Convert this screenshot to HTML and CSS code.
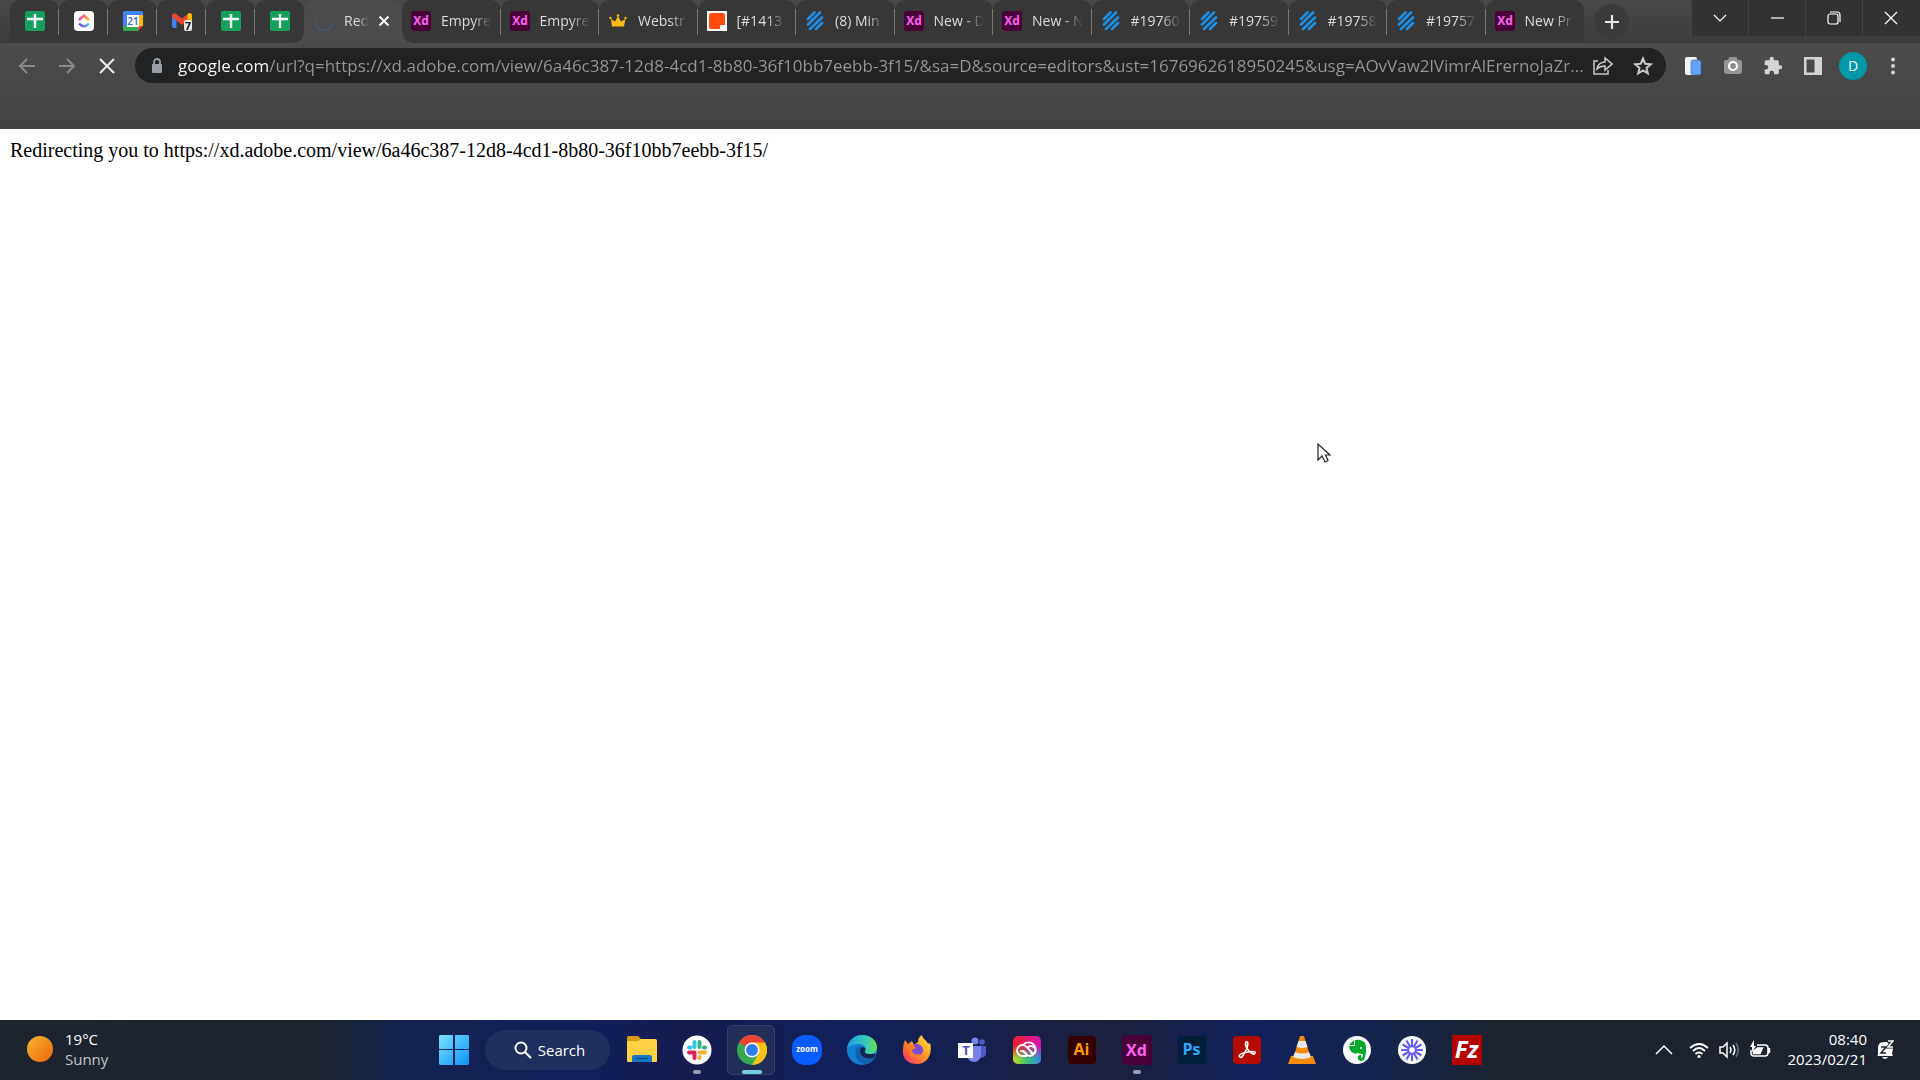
FILE: index.html
```html
<!DOCTYPE html>
<html lang="en">
<head>
<meta charset="utf-8">
<title>Redirecting</title>
<link rel="stylesheet" href="styles.css">
</head>
<body>
<svg class="defs" aria-hidden="true">
  <defs>
    <symbol id="sheets" viewBox="0 0 20 20"><rect width="20" height="20" rx="2" fill="#12a05c"/><path d="M10 3v14M2 8h16" stroke="#fff" stroke-width="2.4"/></symbol>
    <symbol id="help" viewBox="0 0 20 20"><path d="M3 8L9.500 1.500M3 13.500L15 1.500M5 18L17 6.500M11 18L17 12" stroke="#1c8fe8" stroke-width="2.600" stroke-linecap="round"/></symbol>
    <symbol id="xd" viewBox="0 0 20 20"><rect width="20" height="20" rx="3" fill="#470137"/><text x="10" y="14" text-anchor="middle" font-size="12" font-weight="700" fill="#ff61f6">Xd</text></symbol>
  </defs>
</svg>

<header class="browser">
  <div class="strip">
    <div class="tabs">
      <button class="tab pinned" aria-label="Sheet"><svg class="fav"><use href="#sheets"/></svg></button>
      <button class="tab pinned" aria-label="ClickUp"><svg class="fav" viewBox="0 0 20 20"><defs><linearGradient id="cu1"><stop offset="0" stop-color="#f33fc0"/><stop offset="1" stop-color="#ffb01c"/></linearGradient><linearGradient id="cu2"><stop offset="0" stop-color="#8930fd"/><stop offset="1" stop-color="#49ccf9"/></linearGradient></defs><rect width="20" height="20" rx="4" fill="#fff"/><path d="M5 9l5-4.500L15 9" fill="none" stroke="url(#cu1)" stroke-width="2.600"/><path d="M5 12.500q5 5.500 10 0" fill="none" stroke="url(#cu2)" stroke-width="2.600"/></svg></button>
      <button class="tab pinned" aria-label="Calendar"><svg class="fav" viewBox="0 0 20 20"><path d="M2 0h16a2 2 0 0 1 2 2v13h-5v5H2a2 2 0 0 1-2-2V2a2 2 0 0 1 2-2z" fill="#4285f4"/><path d="M16 4h4v11h-4z" fill="#fbbc04"/><path d="M0 15h15v5H2a2 2 0 0 1-2-2z" fill="#34a853"/><path d="M15 15h5l-5 5z" fill="#ea4335"/><path d="M4 4h12v12H4z" fill="#fff"/><text x="10" y="14" text-anchor="middle" font-size="10" font-weight="600" fill="#2a6cd8">21</text></svg></button>
      <button class="tab pinned" aria-label="Gmail"><svg class="fav" viewBox="0 0 20 20"><path d="M0 4h4.500v13H2a2 2 0 0 1-2-2z" fill="#4285f4"/><path d="M15.500 4H20v11h-4.500z" fill="#fbbc04"/><path d="M0 6V4q1-3 4-1.200L10 7.500l6-4.700Q19 1 20 4v2l-10 8z" fill="#ea4335"/><path d="M15.500 3.200Q19 .5 20 4v2l-4.500 3.500z" fill="#fbbc04"/><rect x="12" y="9" width="8" height="11" rx="2" fill="#e8e8e8"/><text x="16" y="19" text-anchor="middle" font-size="11" font-weight="700" fill="#111">7</text></svg></button>
      <button class="tab pinned" aria-label="Sheet"><svg class="fav"><use href="#sheets"/></svg></button>
      <button class="tab pinned last" aria-label="Sheet"><svg class="fav"><use href="#sheets"/></svg></button>
      <div class="tab active"><svg class="fav" viewBox="0 0 20 20"><path d="M1 9a9 9 0 0 0 18 2" fill="none" stroke="#465574" stroke-width="1.800"/></svg><span class="title">Red</span><button class="close" aria-label="Close tab"><svg viewBox="0 0 12 12" width="12" height="12"><path d="M1.500 1.500l9 9m0-9l-9 9" stroke="#fff" stroke-width="2"/></svg></button></div>
      <button class="tab"><svg class="fav"><use href="#xd"/></svg><span class="title">Empyre</span></button>
      <button class="tab"><svg class="fav"><use href="#xd"/></svg><span class="title">Empyre</span></button>
      <button class="tab"><svg class="fav" viewBox="0 0 20 20"><path d="M3 8l4 2.500L10 5l3 5.500L17.500 8 16 15.500H4z" fill="#fdb813"/><circle cx="2.500" cy="7" r="1.200" fill="#fdb813"/><circle cx="10" cy="4.500" r="1.300" fill="#fdb813"/><circle cx="17.500" cy="7" r="1.200" fill="#fdb813"/></svg><span class="title">Webstr</span></button>
      <button class="tab"><svg class="fav" viewBox="0 0 20 20"><path d="M0 0h20v20H0z" fill="#fff"/><path d="M5 2h11q2 0 2 2v10h-4q-1 0-1 1v3H4q-2 0-2-2V5q0-3 3-3z" fill="#ff4a0d"/></svg><span class="title">[#1413</span></button>
      <button class="tab"><svg class="fav"><use href="#help"/></svg><span class="title">(8) Min</span></button>
      <button class="tab"><svg class="fav"><use href="#xd"/></svg><span class="title">New - D</span></button>
      <button class="tab"><svg class="fav"><use href="#xd"/></svg><span class="title">New - N</span></button>
      <button class="tab"><svg class="fav"><use href="#help"/></svg><span class="title">#19760</span></button>
      <button class="tab"><svg class="fav"><use href="#help"/></svg><span class="title">#19759</span></button>
      <button class="tab"><svg class="fav"><use href="#help"/></svg><span class="title">#19758</span></button>
      <button class="tab"><svg class="fav"><use href="#help"/></svg><span class="title">#19757</span></button>
      <button class="tab last"><svg class="fav"><use href="#xd"/></svg><span class="title">New Pr</span></button>
    </div>
    <button class="newtab" aria-label="New tab"><svg width="16" height="16" viewBox="0 0 16 16"><path d="M8 1v14M1 8h14" stroke="#e4e4e4" stroke-width="2.200"/></svg></button>
    <div class="window">
      <button aria-label="Tab search"><svg width="14" height="14" viewBox="0 0 14 14"><path d="M1 4l6 6 6-6"/></svg></button>
      <button aria-label="Minimize"><svg width="14" height="14" viewBox="0 0 14 14"><path d="M1 7h13"/></svg></button>
      <button aria-label="Restore"><svg width="14" height="14" viewBox="0 0 14 14"><rect x="1" y="3" width="10" height="10" rx="2"/><path d="M3 1h7a3 3 0 0 1 3 3v7"/></svg></button>
      <button aria-label="Close"><svg width="14" height="14" viewBox="0 0 14 14"><path d="M1 1l12 12M13 1L1 13"/></svg></button>
    </div>
  </div>

  <div class="toolbar">
    <button class="tool dim" aria-label="Back"><svg width="18" height="18" viewBox="0 0 18 18"><path d="M17 9H2M9 2L2 9l7 7"/></svg></button>
    <button class="tool dim" aria-label="Forward"><svg width="18" height="18" viewBox="0 0 18 18"><path d="M1 9h15M9 2l7 7-7 7"/></svg></button>
    <button class="tool" aria-label="Stop"><svg width="18" height="18" viewBox="0 0 18 18"><path d="M2 2l14 14M16 2L2 16"/></svg></button>
    <div class="omnibox">
      <svg width="12" height="16" viewBox="0 0 12 16"><path d="M3 7V4a3 3 0 0 1 6 0v3" fill="none" stroke="#9aa0a6" stroke-width="1.800"/><rect x="1" y="6" width="10" height="9" rx="1" fill="#9aa0a6"/></svg>
      <input type="text" aria-label="Address" value="google.com/url?q=https://xd.adobe.com/view/6a46c387-12d8-4cd1-8b80-36f10bb7eebb-3f15/&amp;sa=D&amp;source=editors&amp;ust=1676962618950245&amp;usg=AOvVaw2lVimrAlErernoJaZr...">
      <button class="tool" aria-label="Share"><svg class="thin" width="20" height="20" viewBox="0 0 20 20"><path d="M5 5H1v13h14v-4M4 13c1-5 4-7 8-7V2l7 6-7 6v-4c-4 0-6 1-8 3z"/></svg></button>
      <button class="tool" aria-label="Bookmark"><svg class="thin star" width="20" height="20" viewBox="0 0 20 20"><path d="M10 2.500l2.200 5.200 5.600.5-4.300 3.700 1.300 5.500L10 14.500l-4.800 2.900 1.300-5.500L2.200 8.200l5.600-.5z"/></svg></button>
    </div>
    <div class="extensions">
      <button class="tool" aria-label="Device extension"><svg class="plain" width="18" height="20" viewBox="0 0 18 20"><rect x="1" y="1" width="12" height="18" rx="2" fill="#f2f4fa"/><rect x="7" y="4" width="10" height="15" rx="2" fill="#62a4fb" stroke="#3d5f96" stroke-width=".6"/></svg></button>
      <button class="tool" aria-label="Screenshot"><svg class="plain" width="20" height="20" viewBox="0 0 20 20"><path d="M3 4h2l1.500-3h7L15 4h2q2 0 2 2v9q0 3-3 3H4q-3 0-3-3V6q0-2 2-2z" fill="#969696"/><circle cx="10" cy="10" r="4" fill="#8d8d8d" stroke="#fff" stroke-width="2.200"/></svg></button>
      <button class="tool" aria-label="Extensions"><svg class="plain" width="20" height="20" viewBox="0 0 24 24"><path d="M20.500 11H19V7c0-1.100-.9-2-2-2h-4V3.500a2.500 2.500 0 0 0-5 0V5H4c-1.100 0-2 .9-2 2v3.800h1.500a2.700 2.700 0 0 1 0 5.400H2V20c0 1.100.9 2 2 2h3.800v-1.500a2.700 2.700 0 0 1 5.400 0V22H17c1.100 0 2-.9 2-2v-4h1.500a2.500 2.500 0 0 0 0-5z" fill="#d4d4d4"/></svg></button>
      <button class="tool" aria-label="Side panel"><svg class="plain" width="18" height="18" viewBox="0 0 18 18"><path d="M0 0h18v18H0zM2.500 2.500v13h8v-13z" fill="#d4d4d4" fill-rule="evenodd"/></svg></button>
      <button class="tool" aria-label="Profile"><span class="avatar">D</span></button>
      <button class="tool" aria-label="Menu"><svg class="plain" width="6" height="18" viewBox="0 0 6 18"><g fill="#d4d4d4"><circle cx="3" cy="2.500" r="2"/><circle cx="3" cy="9" r="2"/><circle cx="3" cy="15.500" r="2"/></g></svg></button>
    </div>
  </div>
</header>

<main class="page">Redirecting you to https://xd.adobe.com/view/6a46c387-12d8-4cd1-8b80-36f10bb7eebb-3f15/
  <svg class="cursor" width="14" height="22" viewBox="0 0 14 22"><path d="M1 1v16l4-4 3 6 3-1.500L8.500 12H13z" fill="#fff" stroke="#222" stroke-width="1.200"/></svg>
</main>

<footer class="taskbar">
  <button class="weather"><svg width="26" height="26" viewBox="0 0 26 26"><defs><linearGradient id="sun" x2="1" y2="1"><stop offset="0" stop-color="#f3b82e"/><stop offset="1" stop-color="#f0640c"/></linearGradient></defs><circle cx="13" cy="13" r="13" fill="url(#sun)"/></svg><span>19°C<small>Sunny</small></span></button>

  <nav class="apps" aria-label="Apps">
    <button class="app" aria-label="Start"><svg width="30" height="30" viewBox="0 0 30 30"><defs><linearGradient id="win" gradientUnits="userSpaceOnUse" x2="30" y2="30"><stop offset="0" stop-color="#7be0ff"/><stop offset="1" stop-color="#0a94f5"/></linearGradient></defs><path d="M1 0h13v14H0V1zM16 0h13l1 1v13H16zM0 15h14v15H1l-1-1zM16 15h14v14l-1 1H16z" fill="url(#win)"/></svg></button>
    <button class="search"><svg width="18" height="18" viewBox="0 0 18 18"><circle cx="7" cy="7" r="5.500" fill="none" stroke="#fff" stroke-width="2"/><path d="M11 11l6 6" stroke="#fff" stroke-width="2.200"/></svg>Search</button>
    <button class="app" aria-label="File Explorer"><svg width="30" height="30" viewBox="0 0 30 30"><path d="M0 3q0-2 2-2h9l3 3h15v8H0z" fill="#d99a10"/><path d="M0 6h11l3-2h14q2 0 2 2v20q0 1-1 1H1q-1 0-1-1z" fill="#ffd143"/><path d="M5 27v-5q0-2 2-2h16q2 0 2 2v5z" fill="#1379c4"/><path d="M9 23.500h12" stroke="#074f88" stroke-width="1.500"/></svg></button>
    <button class="app running" aria-label="Slack"><svg width="30" height="30" viewBox="0 0 30 30"><circle cx="15" cy="15" r="14.500" fill="#fff"/><g stroke-width="4" stroke-linecap="round" fill="none"><path d="M12.500 7v5M7 12.500h1.500" stroke="#36c5f0"/><path d="M17.500 7v5M23 12.500h-1" stroke="#2eb67d"/><path d="M17.500 17.500H23M17.500 23v-1" stroke="#ecb22e"/><path d="M12.500 18v5M7 17.500h5.500" stroke="#e01e5a"/></g></svg></button>
    <button class="app current" aria-label="Chrome"><svg width="30" height="30" viewBox="0 0 30 30"><circle cx="15" cy="15" r="15" fill="#34a853"/><path d="M15 15L2 7.500A15 15 0 0 1 28 7.500z" fill="#ea4335"/><path d="M15 7.500h13A15 15 0 0 1 15 30l6.500-11z" fill="#fbc116"/><circle cx="15" cy="15" r="7.500" fill="#fff"/><circle cx="15" cy="15" r="6" fill="#2d7df0"/></svg></button>
    <button class="app" aria-label="Zoom"><svg width="30" height="30" viewBox="0 0 30 30"><rect width="30" height="30" rx="13" fill="#0b5cff"/><text x="15" y="17" text-anchor="middle" font-size="8" font-weight="700" fill="#fff">zoom</text></svg></button>
    <button class="app" aria-label="Edge"><svg width="30" height="30" viewBox="0 0 30 30"><defs><linearGradient id="edge"><stop offset="0" stop-color="#1f9fe0"/><stop offset=".6" stop-color="#35c7c0"/><stop offset="1" stop-color="#66e04e"/></linearGradient></defs><circle cx="15" cy="15" r="15" fill="#1280d0"/><path d="M0 14C1 5 8 0 15 0c9 0 15 6 15 12 0 5-4 7-7 7-4 0-6-2-5-3 2-2 0-7-6-7C7 9 2 11 0 14z" fill="url(#edge)"/><path d="M9 14c-3 8 3 15 11 15 3-1 6-3 8-6-5 2-16 2-15-7 0-2 2-4 3-4-3-1-6 0-7 2z" fill="#125fae"/><path d="M13 16c0-3 2-4 3-4 3 1 3 3 2 4-1 2 1 3 4 3h7l-2 4c-6 2-14 0-14-7z" fill="#12264f"/></svg></button>
    <button class="app" aria-label="Firefox"><svg width="30" height="30" viewBox="0 0 30 30"><defs><linearGradient id="ff" x1="1" x2="0" y2="1"><stop offset="0" stop-color="#fff44f"/><stop offset=".45" stop-color="#ff9a1f"/><stop offset="1" stop-color="#f0266f"/></linearGradient></defs><path d="M3 5l3 4 4-3 2 4 4-3c0-4 2-6 4-7 0 4 5 5 6 9l2-1c3 11-3 21-13 21S0 23 1 14q0-5 2-9z" fill="url(#ff)"/><circle cx="15" cy="15" r="6" fill="#7a4bd6"/><path d="M4 9c4 0 8 1 10 4l-4 2c0 4 5 6 9 3-2 6-15 6-15-9z" fill="#ff7a25"/></svg></button>
    <button class="app" aria-label="Teams"><svg width="28" height="28" viewBox="0 0 28 28"><circle cx="17" cy="5" r="3.500" fill="#7b83eb"/><circle cx="24" cy="6" r="2.800" fill="#5059c9"/><path d="M20 10h8v8q-1 4-6 4z" fill="#5059c9"/><path d="M9 10h14v9q-1 7-7 7t-7-7z" fill="#7b83eb"/><path d="M0 7h15v15H0z" fill="#fff"/><text x="8" y="19" text-anchor="middle" font-size="13" font-weight="700" fill="#4b53bc">T</text></svg></button>
    <button class="app" aria-label="Creative Cloud"><svg width="28" height="28" viewBox="0 0 28 28"><defs><linearGradient id="cc1"><stop offset="0" stop-color="#ee1c25"/><stop offset="1" stop-color="#d815b5"/></linearGradient><linearGradient id="cc2"><stop offset="0" stop-color="#c9d925"/><stop offset=".4" stop-color="#4fc860"/><stop offset="1" stop-color="#258bea"/></linearGradient><linearGradient id="cc3" x2="0" y2="1"><stop offset=".35" stop-color="#fff" stop-opacity="0"/><stop offset=".8" stop-color="#fff"/></linearGradient><mask id="ccm"><path d="M0 0h28v28H0z" fill="url(#cc3)"/></mask></defs><rect width="28" height="28" rx="5" fill="url(#cc1)"/><rect width="28" height="28" rx="5" fill="url(#cc2)" mask="url(#ccm)"/><g fill="none" stroke="#fff" stroke-width="1.800"><path d="M14 20H9.500a5.500 5.500 0 0 1 0-11q2.500 0 4 2l6 6M10 9a7 7 0 1 1 7.500 11q-2.500 0-4-1.500L10 15"/><path d="M13.500 18l-2-2q-2.500-2-4-.5M14 12q3-3.500 6.500-1t1.500 6q-2.500 1.500-4.500-.5"/></g></svg></button>
    <button class="app" aria-label="Illustrator"><span class="adobe ai">Ai</span></button>
    <button class="app running" aria-label="Adobe XD"><span class="adobe xd">Xd</span></button>
    <button class="app" aria-label="Photoshop"><span class="adobe ps">Ps</span></button>
    <button class="app" aria-label="Acrobat"><svg width="28" height="28" viewBox="0 0 28 28"><rect width="28" height="28" rx="4" fill="#b50b00"/><path d="M13 6q3-1 1 6-2 5-5 9-2 1-3-1 1-3 9-4 8-1 7 1-1 3-6-2-5-6-3-9z" fill="none" stroke="#fff" stroke-width="1.600"/></svg></button>
    <button class="app" aria-label="VLC"><svg width="28" height="30" viewBox="0 0 28 30"><path d="M3 21h22l3 8H0z" fill="#f48b0c"/><path d="M12 1h4l7 23q-9 4-18 0z" fill="#f48b0c"/><path d="M10.500 6h7l2 6q-5 2-11 0zM7 17q7 3 14 0l2 5q-9 4-18 0z" fill="#e9e9e9"/></svg></button>
    <button class="app" aria-label="Evernote"><svg width="28" height="28" viewBox="0 0 28 28"><circle cx="14" cy="14" r="14" fill="#fff"/><path d="M6 9l5-5v5zM12 4c4-1 9 1 10 3 2 5 1 17-3 18-6 0-5-7-1-6v3c1 0 2-1 2-4-5 0-5-1-5-2-1 3-8 2-9-6h6z" fill="#00a82d"/><circle cx="18" cy="12" r="1" fill="#fff"/></svg></button>
    <button class="app" aria-label="Loom"><svg width="28" height="28" viewBox="0 0 28 28"><circle cx="14" cy="14" r="14" fill="#fff"/><path d="M14 3v22M3 14h22M8.500 4.500l11 19M19.500 4.500l-11 19M4.500 8.500l19 11M23.500 8.500l-19 11" stroke="#625df5" stroke-width="2.200"/><circle cx="14" cy="14" r="4.500" fill="#625df5"/><circle cx="14" cy="14" r="2.800" fill="#fff"/></svg></button>
    <button class="app" aria-label="FileZilla"><span class="filezilla">Fz</span></button>
  </nav>

  <div class="tray">
    <button class="chevron" aria-label="Show hidden icons"><svg width="18" height="12" viewBox="0 0 18 12"><path d="M1 10l8-8 8 8"/></svg></button>
    <button class="status" aria-label="Network, volume and battery">
      <svg width="20" height="20" viewBox="0 0 20 20"><path d="M1 8q9-8 18 0M4 11q6-6 12 0M6.500 14q3.500-3 7 0" stroke-width="1.800"/><circle cx="10" cy="16.500" r="1.600" fill="#fff" stroke="none"/></svg>
      <svg width="20" height="20" viewBox="0 0 20 20"><path d="M1 7v6h3l4 4V3L4 7zM11 7q2 3 0 6M14 5q3.500 5 0 10"/><path d="M17 3q4.500 7 0 14" stroke="#6b717b"/></svg>
      <svg width="22" height="20" viewBox="0 0 22 20"><path d="M8 5h8q3 0 3 3v5q0 3-3 3H5q-3 0-3-3v-3"/><path d="M4.500 13.500V11l4-3h5l-2.500 5.500z" fill="#fff"/><path d="M5 0L1 7h2v5l4-6H5z" fill="#fff" stroke="none"/><path d="M20 8v5" stroke-width="2.400"/></svg>
    </button>
    <button class="clock"><time>08:40</time><time>2023/02/21</time></button>
    <button aria-label="Notifications"><svg width="18" height="20" viewBox="0 0 18 20"><path d="M2 15V8q0-6 6-6h3l6 6-1 6 1 2H1zM6 17h6q-3 4-6 0z" fill="#fff" stroke="none"/><path d="M5 7h5l-5 6h5" stroke="#1c222c" stroke-width="1.500"/><path d="M12 1h5l-5 6h5" stroke="#1c222c" stroke-width="3"/><path d="M12 1h5l-5 6h5" stroke="#fff" stroke-width="1.500"/></svg></button>
  </div>
</footer>
</body>
</html>
```
FILE: styles.css
```css
* { box-sizing: border-box; }
body {
  margin: 0;
  min-height: 100vh;
  display: flex;
  flex-direction: column;
  background: #fff;
  font-family: "Open Sans", sans-serif;
  font-size: 14px;
}
button {
  border: 0;
  padding: 0;
  margin: 0;
  background: none;
  color: inherit;
  font: inherit;
  display: flex;
  align-items: center;
  justify-content: center;
}
svg { flex: none; }
svg text { font-family: "Open Sans", sans-serif; }
.defs { position: absolute; width: 0; height: 0; }

/* Tab strip */
.strip {
  display: flex;
  height: 43px;
  padding-left: 10px;
  background: linear-gradient(#484848, #3c3c3c);
}
.tabs { display: flex; flex: 1; max-width: 1574px; min-width: 0; }
.tab {
  flex: 1;
  min-width: 0;
  height: 43px;
  padding: 0 9px 2px;
  display: flex;
  align-items: center;
  justify-content: flex-start;
  gap: 10px;
  position: relative;
  background: #373737;
  color: #dcdcdc;
  border-radius: 10px 10px 0 0;
}
.tab::after {
  content: "";
  position: absolute;
  right: 0;
  top: 9px;
  width: 1px;
  height: 26px;
  background: #777;
}
.tab.last::after { display: none; }
.tab.pinned { flex: 0 0 49px; justify-content: center; padding: 0 0 2px; }
.tab.active {
  flex: 0 0 98px;
  padding: 0 9px 2px 10px;
  background: #4c4c4c;
  z-index: 1;
}
.tab.active::before, .tab.active::after {
  content: "";
  position: absolute;
  top: auto;
  bottom: 0;
  left: -10px;
  width: 10px;
  height: 10px;
  background: radial-gradient(circle at 0 0, transparent 9px, #4c4c4c 10px);
}
.tab.active::after {
  left: auto;
  right: -10px;
  background: radial-gradient(circle at 100% 0, transparent 9px, #4c4c4c 10px);
}
.fav { width: 20px; height: 20px; }
.title {
  flex: 1;
  min-width: 0;
  text-align: left;
  white-space: nowrap;
  overflow: hidden;
  mask-image: linear-gradient(to left, transparent, #000 20px);
}
.active .title { mask-image: linear-gradient(to left, transparent, #000 10px); }
.close { width: 12px; height: 20px; margin-right: 3px; }
.newtab {
  width: 35px;
  height: 35px;
  margin: 4px 10px;
  border-radius: 50%;
  background: #3a3a3a;
}
.window { display: flex; height: 36px; margin-left: auto; padding-right: 1px; background: #323232; }
.window button { width: 57px; border-left: 1px solid #424242; }
.window svg { fill: none; stroke: #fff; stroke-width: 1.2; }

/* Toolbar */
.toolbar {
  height: 86px;
  padding: 5px 7px 0;
  display: flex;
  align-items: flex-start;
  background: linear-gradient(#4c4c4c, #424242);
}
.tool { width: 40px; height: 35px; flex: none; }
.tool svg { fill: none; stroke: #f0f0f0; stroke-width: 2; }
.dim svg { stroke: #8a8a8a; }
.tool svg.plain { stroke: none; }
.tool svg.thin { stroke: #c8c8c8; stroke-width: 1.5; }
.tool svg.star { stroke-width: 2; }
.omnibox {
  flex: 1;
  min-width: 0;
  height: 35px;
  margin: 0 7px 0 8px;
  padding: 0 3px 0 16px;
  display: flex;
  align-items: center;
  border-radius: 18px;
  background: #202224;
}
.omnibox input {
  flex: 1;
  min-width: 0;
  height: 26px;
  margin-left: 15px;
  padding: 0;
  border: 0;
  outline: 0;
  font: inherit;
  font-size: 17px;
  color: transparent;
  background: linear-gradient(90deg, #fff 91px, #979797 91px);
  background-clip: text;
}
.extensions { display: flex; }
.avatar {
  width: 28px;
  height: 28px;
  border-radius: 50%;
  background: #0097a7;
  color: #fff;
  line-height: 28px;
}

/* Page */
.page {
  flex: 1;
  position: relative;
  padding: 10px;
  font: 20px/22px "Liberation Serif", serif;
  color: #000;
}
.cursor { position: absolute; left: 1317px; top: 314px; }

/* Taskbar */
.taskbar {
  height: 60px;
  display: grid;
  grid-template-columns: 1fr auto 1fr;
  color: #fff;
  font-size: 15px;
  line-height: 20px;
  background: linear-gradient(90deg, #1e242e 0, #1c2531 17%, #12234f 21%, #111f5b 30%, #161c50 36%, #11205c 44%, #1c203c 58%, #11205c 65%, #15244c 72%, #1c2430 78%, #1c222e);
}
.weather { justify-self: start; padding: 0 0 2px 27px; gap: 12px; text-align: left; }
.weather small { display: block; font-size: inherit; color: #c2c6cc; }
.apps { display: flex; align-items: center; }
.app { width: 55px; height: 50px; position: relative; }
.running::after, .current::after {
  content: "";
  position: absolute;
  left: 24px;
  bottom: 1px;
  width: 8px;
  height: 4px;
  border-radius: 2px;
  background: #979eb2;
}
.current::before {
  content: "";
  position: absolute;
  inset: 0 4px 0 3px;
  border: 1px solid #34416c;
  border-radius: 5px;
  background: #202e58;
}
.current svg { position: relative; }
.current::after { left: 18px; width: 20px; background: #76cfdd; }
.search {
  width: 125px;
  height: 40px;
  margin: 0 4px;
  padding-left: 4px;
  gap: 6px;
  border-radius: 20px;
  background: #202e60;
}
.adobe {
  width: 28px;
  height: 28px;
  border-radius: 4px;
  font-size: 16px;
  font-weight: 700;
  line-height: 26px;
}
.ai { background: #330000; color: #ff9a00; }
.xd { width: 30px; height: 30px; background: #470137; color: #ff61f6; line-height: 30px; }
.ps { background: #001e36; color: #31a8ff; }
.filezilla {
  width: 30px;
  height: 30px;
  background: #b30000;
  font-size: 24px;
  font-weight: 700;
  font-style: italic;
  line-height: 28px;
}
.tray {
  justify-self: end;
  display: flex;
  align-items: center;
  padding-right: 26px;
}
.tray svg { fill: none; stroke: #fff; stroke-width: 1.5; }
.chevron { margin-right: 16px; }
.status { gap: 10px; margin-right: 16px; }
.clock { flex-direction: column; align-items: flex-end; width: 80px; margin-right: 9px; padding-bottom: 2px; }
```
